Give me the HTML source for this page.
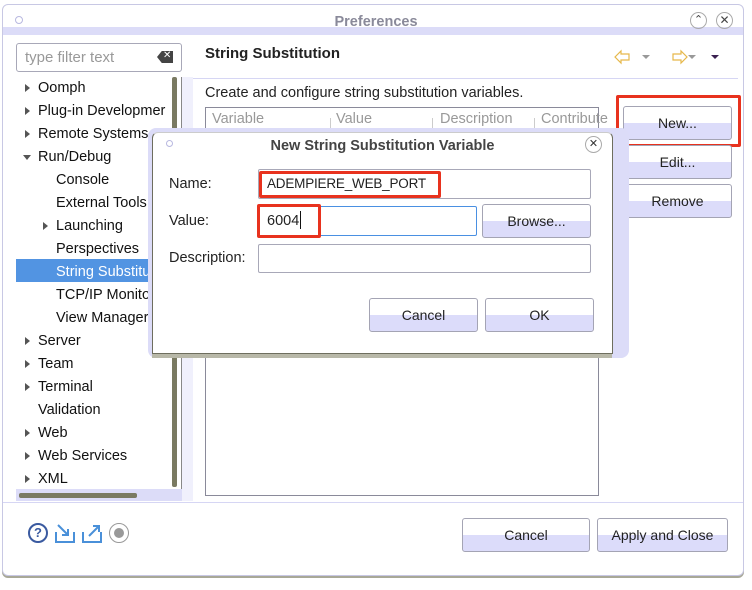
<!DOCTYPE html>
<html><head><meta charset="utf-8"><style>
*{box-sizing:border-box;margin:0;padding:0}
body{width:752px;height:590px;background:#fff;position:relative;overflow:hidden;font-family:"Liberation Sans","DejaVu Sans",sans-serif;font-size:14px;color:#222}
.a{position:absolute}
.btn{position:absolute;border:1px solid #a4a4b4;border-radius:3px;background:linear-gradient(#fff 0,#fff 50%,#dcdcfa 50%,#dcdcfa 100%);text-align:center;font-size:14px;color:#222}
.inp{position:absolute;border:1px solid #a8a8b8;border-radius:2px;background:#fff}
.red{position:absolute;border:3px solid #e8321e;border-radius:2px}
.tri{position:absolute;width:0;height:0;border-top:4px solid transparent;border-bottom:4px solid transparent;border-left:5px solid #555}
.trd{position:absolute;width:0;height:0;border-left:4px solid transparent;border-right:4px solid transparent;border-top:5px solid #555}
.ti{position:absolute;font-size:14.5px;color:#111;white-space:nowrap}
</style></head><body>
<div class="a" style="left:0;top:0;width:752px;height:590px;background:#fff"></div>
<div class="a" style="left:2px;top:4px;width:742px;height:572px;border:1px solid #c8c8e4;border-radius:6px;box-shadow:0 2px 0 #a8a898;background:#fff"></div>
<div class="a" style="left:3px;top:27px;width:740px;height:8px;background:#dcdcf8"></div>
<div class="a" style="left:15px;top:16px;width:8px;height:8px;border:1px solid #b8b8e0;border-radius:50%"></div>
<div class="a" style="left:0;top:14px;width:752px;text-align:center;color:#8a8a9a;font-weight:bold;font-size:14.5px">Preferences</div>
<div class="a" style="left:690px;top:12px;width:17px;height:17px;border:1px solid #aaa;border-radius:50%;font-size:11px;text-align:center;line-height:15px;color:#444">&#8963;</div>
<div class="a" style="left:716px;top:12px;width:17px;height:17px;border:1px solid #aaa;border-radius:50%;font-size:12px;text-align:center;line-height:15px;color:#444">✕</div>
<div class="inp" style="left:16px;top:43px;width:166px;height:29px;border-radius:3px"></div>
<div class="a" style="left:25px;top:49px;color:#999;font-size:15px">type filter text</div>
<div class="a" style="left:157px;top:51px;width:16px;height:12px;background:#444;clip-path:polygon(30% 0,100% 0,100% 100%,30% 100%,0 50%)"></div>
<div class="a" style="left:163px;top:50px;color:#fff;font-size:10px;font-weight:bold">✕</div>
<div class="a" style="left:16px;top:77px;width:166px;height:420px;background:#fff;border-right:1px solid #888"></div>
<div class="a" style="left:16px;top:259px;width:150px;height:23px;background:#5294e2"></div>
<div class="tri" style="left:25px;top:84px"></div><div class="ti" style="left:38px;top:80px">Oomph</div>
<div class="tri" style="left:25px;top:107px"></div><div class="ti" style="left:38px;top:103px">Plug-in Developmer</div>
<div class="tri" style="left:25px;top:130px"></div><div class="ti" style="left:38px;top:126px">Remote Systems</div>
<div class="trd" style="left:23px;top:155px"></div><div class="ti" style="left:38px;top:149px">Run/Debug</div>
<div class="ti" style="left:56px;top:172px">Console</div>
<div class="ti" style="left:56px;top:195px">External Tools</div>
<div class="tri" style="left:43px;top:222px"></div><div class="ti" style="left:56px;top:218px">Launching</div>
<div class="ti" style="left:56px;top:241px">Perspectives</div>
<div class="ti" style="left:56px;top:264px;color:#fff">String Substitu</div>
<div class="ti" style="left:56px;top:287px">TCP/IP Monito</div>
<div class="ti" style="left:56px;top:310px">View Manager</div>
<div class="tri" style="left:25px;top:337px"></div><div class="ti" style="left:38px;top:333px">Server</div>
<div class="tri" style="left:25px;top:360px"></div><div class="ti" style="left:38px;top:356px">Team</div>
<div class="tri" style="left:25px;top:383px"></div><div class="ti" style="left:38px;top:379px">Terminal</div>
<div class="ti" style="left:38px;top:402px">Validation</div>
<div class="tri" style="left:25px;top:429px"></div><div class="ti" style="left:38px;top:425px">Web</div>
<div class="tri" style="left:25px;top:452px"></div><div class="ti" style="left:38px;top:448px">Web Services</div>
<div class="tri" style="left:25px;top:475px"></div><div class="ti" style="left:38px;top:471px">XML</div>
<div class="a" style="left:169px;top:77px;width:12px;height:420px;background:#fff"></div>
<div class="a" style="left:172px;top:77px;width:5px;height:410px;background:#7a7a62;border-radius:2px"></div>
<div class="a" style="left:16px;top:489px;width:166px;height:12px;background:#dcdcf8"></div>
<div class="a" style="left:19px;top:493px;width:118px;height:5px;background:#7a7a62;border-radius:2px"></div>
<div class="a" style="left:182px;top:77px;width:11px;height:424px;background:#f0f0fc"></div>
<div class="a" style="left:205px;top:45px;font-weight:bold;font-size:15px;color:#222">String Substitution</div>
<svg class="a" style="left:612px;top:48px" width="115" height="18">
<path d="M3 9 L9 3 L9 6 L17 6 L17 12 L9 12 L9 15 Z" fill="#fff" stroke="#e6b84a" stroke-width="1.2"/>
<path d="M30 7 L38 7 L34 11Z" fill="#999"/>
<path d="M61 6 L69 6 L69 3 L75 9 L69 15 L69 12 L61 12 Z" fill="#fff" stroke="#e6b84a" stroke-width="1.2"/>
<path d="M76 7 L84 7 L80 11Z" fill="#999"/>
<path d="M99 7 L107 7 L103 11Z" fill="#3a2050"/>
</svg>
<div class="a" style="left:193px;top:78px;width:545px;height:1px;background:#d6d6f4"></div>
<div class="a" style="left:205px;top:85px;font-size:14.5px;color:#222">Create and configure string substitution variables.</div>
<div class="a" style="left:205px;top:107px;width:394px;height:389px;border:1px solid #8a8a9a;background:#fff"></div>
<div class="a" style="left:212px;top:111px;color:#999;font-size:14.5px">Variable</div>
<div class="a" style="left:336px;top:111px;color:#999;font-size:14.5px">Value</div>
<div class="a" style="left:440px;top:111px;color:#999;font-size:14.5px">Description</div>
<div class="a" style="left:541px;top:111px;color:#999;font-size:14.5px">Contribute</div>
<div class="a" style="left:330px;top:118px;width:1px;height:12px;background:#ccc"></div>
<div class="a" style="left:432px;top:118px;width:1px;height:12px;background:#ccc"></div>
<div class="a" style="left:534px;top:118px;width:1px;height:12px;background:#ccc"></div>
<div class="btn" style="left:623px;top:106px;width:109px;height:34px;line-height:32px">New...</div>
<div class="red" style="left:616px;top:95px;width:125px;height:52px"></div>
<div class="btn" style="left:623px;top:145px;width:109px;height:34px;line-height:32px">Edit...</div>
<div class="btn" style="left:623px;top:184px;width:109px;height:34px;line-height:32px">Remove</div>
<div class="a" style="left:3px;top:502px;width:740px;height:1px;background:#d6d6f4"></div>
<div class="a" style="left:28px;top:523px;width:20px;height:20px;border:2px solid #3a5aa0;border-radius:50%;text-align:center;font-weight:bold;color:#3a5aa0;font-size:13px;line-height:16px">?</div>
<svg class="a" style="left:54px;top:522px" width="52" height="22"><path d="M2 10 V20 H20 V10" fill="none" stroke="#4a90d9" stroke-width="2"/><path d="M4 3 L14 13 M14 7 V13 H8" fill="none" stroke="#4a90d9" stroke-width="2"/><path d="M29 10 V20 H47 V10" fill="none" stroke="#4a90d9" stroke-width="2"/><path d="M35 14 L45 4 M39 4 H45 V10" fill="none" stroke="#4a90d9" stroke-width="2"/></svg>
<div class="a" style="left:109px;top:523px;width:20px;height:20px;border:1px solid #999;border-radius:50%"></div>
<div class="a" style="left:114px;top:528px;width:10px;height:10px;background:#999;border-radius:50%"></div>
<div class="btn" style="left:462px;top:518px;width:128px;height:34px;line-height:32px">Cancel</div>
<div class="btn" style="left:597px;top:518px;width:131px;height:34px;line-height:32px">Apply and Close</div>
<div class="a" style="left:148px;top:128px;width:481px;height:230px;border-radius:8px;background:#dcdcf8"></div>
<div class="a" style="left:152px;top:353px;width:460px;height:5px;background:#b8b8a8"></div>
<div class="a" style="left:152px;top:132px;width:461px;height:222px;background:#fff;border:1px solid #6e6e5e;border-top-color:#ccc;border-radius:6px 6px 0 0"></div>
<div class="a" style="left:166px;top:140px;width:7px;height:7px;border:1px solid #b8b8e0;border-radius:50%"></div>
<div class="a" style="left:152px;top:138px;width:461px;text-align:center;font-weight:bold;color:#444;font-size:14.5px">New String Substitution Variable</div>
<div class="a" style="left:585px;top:136px;width:17px;height:17px;border:1px solid #aaa;border-radius:50%;font-size:11px;text-align:center;line-height:15px;color:#333">✕</div>
<div class="a" style="left:169px;top:176px;font-size:14.5px">Name:</div>
<div class="a" style="left:169px;top:213px;font-size:14.5px">Value:</div>
<div class="a" style="left:169px;top:250px;font-size:14.5px">Description:</div>
<div class="inp" style="left:258px;top:169px;width:333px;height:30px"></div>
<div class="red" style="left:259px;top:171px;width:182px;height:27px"></div>
<div class="a" style="left:267px;top:176px;font-size:13.5px;letter-spacing:-0.2px">ADEMPIERE_WEB_PORT</div>
<div class="inp" style="left:258px;top:206px;width:219px;height:30px;border:1px solid #4a90e2"></div>
<div class="red" style="left:257px;top:204px;width:64px;height:34px"></div>
<div class="a" style="left:267px;top:213px;font-size:14.5px">6004</div>
<div class="a" style="left:300px;top:211px;width:1px;height:18px;background:#111"></div>
<div class="btn" style="left:482px;top:204px;width:109px;height:34px;line-height:32px">Browse...</div>
<div class="inp" style="left:258px;top:244px;width:333px;height:29px"></div>
<div class="btn" style="left:369px;top:298px;width:109px;height:34px;line-height:32px">Cancel</div>
<div class="btn" style="left:485px;top:298px;width:109px;height:34px;line-height:32px">OK</div>
</body></html>
